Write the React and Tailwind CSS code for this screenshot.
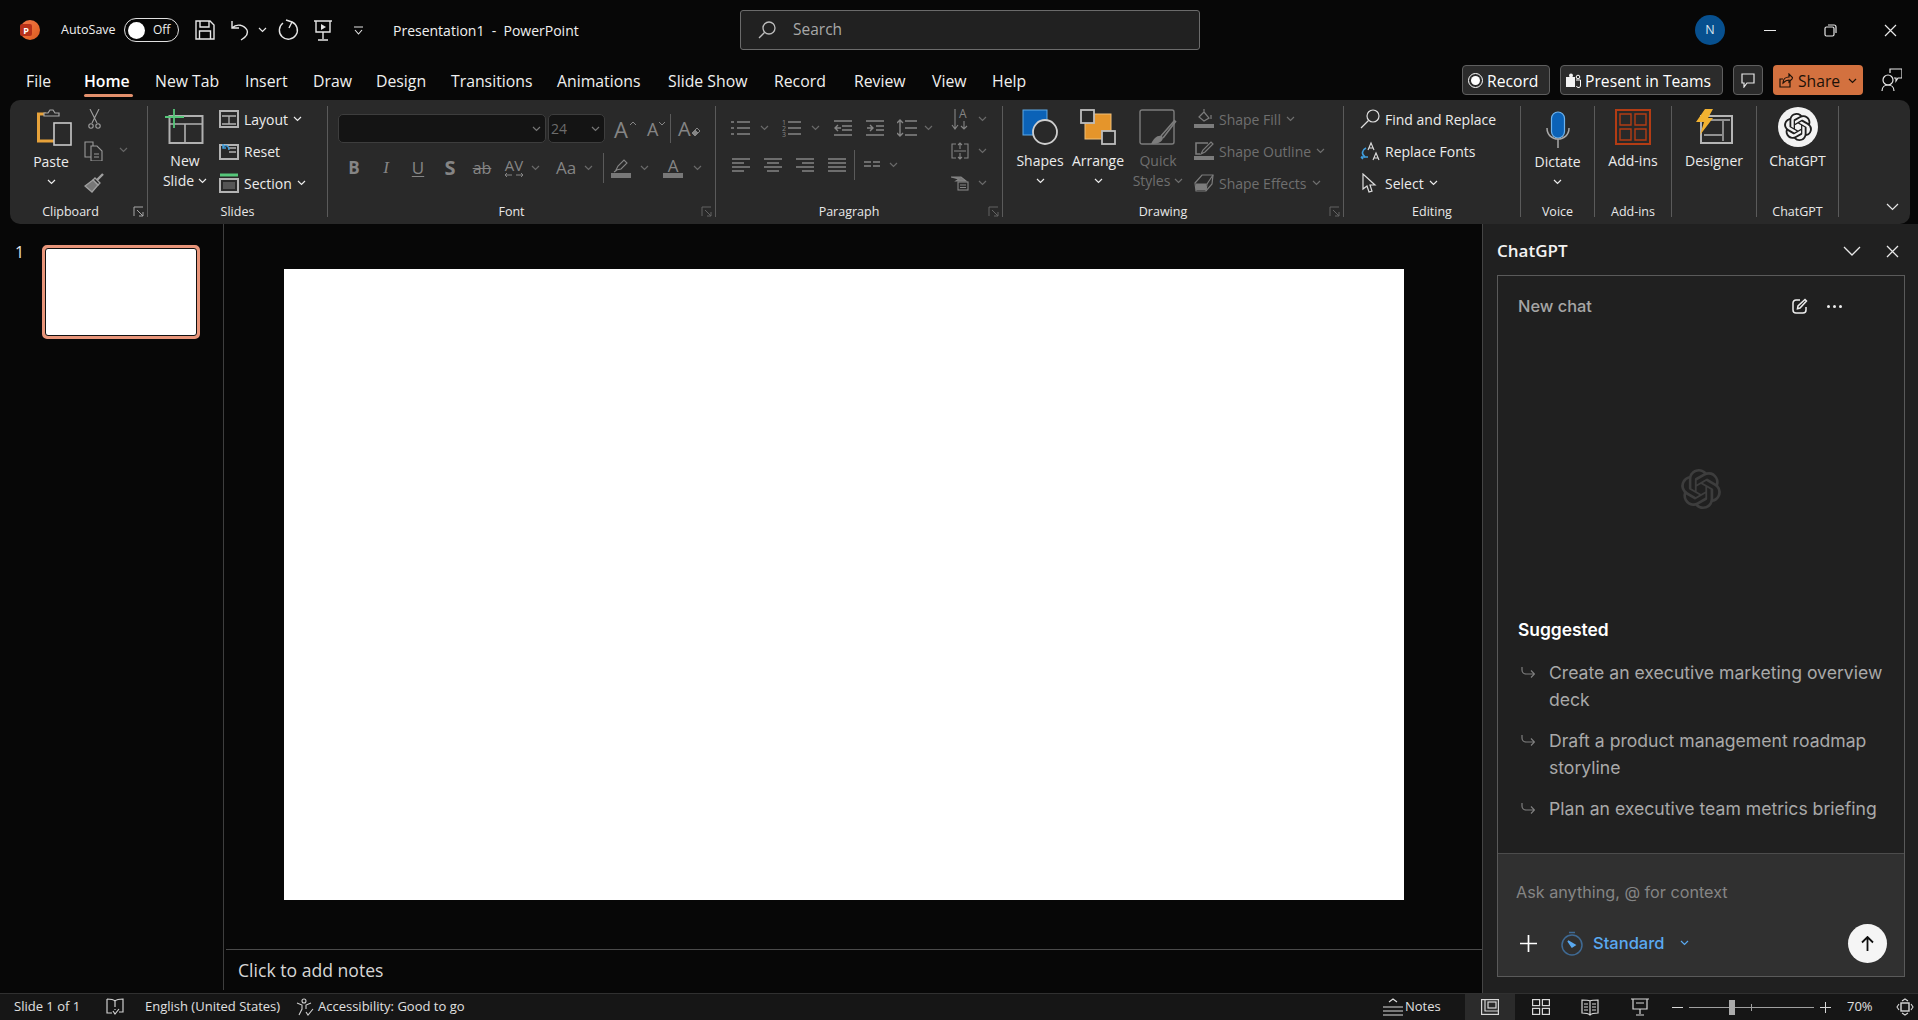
import React from 'react';
import { SiOpenai } from 'react-icons/si';

const Ic = ({ w = 20, h = 20, sw = 1.3, className = '', children }) => (
  <svg width={w} height={h} viewBox={`0 0 ${w} ${h}`} fill="none" stroke="currentColor" strokeWidth={sw} className={`shrink-0 ${className}`}>
    {children}
  </svg>
);

const Chev = ({ className = '' }) => (
  <Ic w={9} h={6} sw={1.2} className={className}><path d="M1 1l3.5 3.5L8 1" /></Ic>
);

const Launcher = () => (
  <Ic w={12} h={12} sw={1} className="text-[#a8a8a8]">
    <path d="M1 10V1h9M4 4l6 6M10 6v4H6" />
  </Ic>
);

const DimLauncher = () => (
  <Ic w={12} h={12} sw={1} className="text-[#636363]">
    <path d="M1 10V1h9M4 4l6 6M10 6v4H6" />
  </Ic>
);

const Sep = () => <div className="w-px h-[111px] mt-[6px] bg-[#5a5a5a] shrink-0" />;

function Group({ w, label, launcher, labelClass = '', children }) {
  return (
    <div className={`${w} shrink-0 flex flex-col`}>
      <div className="h-[100px] flex pt-[3px]">{children}</div>
      <div className="h-[24px] flex items-center">
        <div className={`flex-1 text-center text-[12.5px] text-[#e8e8e8] leading-none ${labelClass}`}>{label}</div>
        {launcher && <div className="w-[16px] flex justify-center">{launcher}</div>}
      </div>
    </div>
  );
}

function BigBtn({ w, ml, icon, line, line2, chev, dim }) {
  return (
    <div className={`${w} ${ml} shrink-0 flex flex-col items-center text-[14px] leading-none ${dim ? 'text-[#6f6f6f]' : 'text-[#ececec]'}`}>
      <div className="h-[48px] flex items-center justify-center">{icon}</div>
      <div className="h-[20px] flex items-center whitespace-nowrap">{line}</div>
      <div className="h-[20px] flex items-center gap-[4px] whitespace-nowrap">
        {line2}
        {chev && <Chev />}
      </div>
    </div>
  );
}

function SmallRow({ icon, text, chev, dim }) {
  return (
    <div className={`h-[32px] flex items-center gap-[5px] text-[14px] whitespace-nowrap ${dim ? 'text-[#6f6f6f]' : 'text-[#ececec]'}`}>
      {icon}
      <span>{text}</span>
      {chev && <Chev />}
    </div>
  );
}

const Dim = ({ className = '', children }) => (
  <div className={`flex items-center justify-center text-[#858585] shrink-0 ${className}`}>{children}</div>
);

const Lines = ({ rows, w = 19, children }) => (
  <Ic w={w} h={20} sw={1.5}>
    {rows.map((r, i) => <path key={i} d={`M${r[0]} ${r[1]}H${r[2]}`} />)}
    {children}
  </Ic>
);

const PasteIcon = () => (
  <Ic w={36} h={40} className="ml-[6px]">
    <path d="M10 6H2.5v27H18" stroke="#e7a23a" strokeWidth="3" />
    <path d="M8 8V5h4l2-3h3l2 3h4v3z" stroke="#a8a8a8" strokeWidth="1.2" fill="#292929" />
    <rect x="18" y="15" width="17" height="22" stroke="#c9c9c9" strokeWidth="1.6" fill="#292929" />
  </Ic>
);

const NewSlideIcon = () => (
  <Ic w={40} h={38}>
    <rect x="4.5" y="8" width="33" height="27" stroke="#b0b0b0" strokeWidth="2" />
    <path d="M5 16h32M20 16v19" stroke="#b0b0b0" strokeWidth="1.6" />
    <path d="M0 9h19M9 1v19" stroke="#56c77a" strokeWidth="1.8" />
  </Ic>
);

const LayoutIcon = () => (
  <Ic className="text-[#b3b3b3]">
    <rect x="1" y="2" width="18" height="16" strokeWidth="2" />
    <path d="M3 7h14M10 7v8M3 15h14" />
  </Ic>
);

const ResetIcon = () => (
  <Ic className="text-[#b3b3b3]">
    <rect x="1" y="4" width="18" height="14" strokeWidth="2" />
    <path d="M9 7h8M10 11h7" />
    <path d="M7 7H4V3M4 6c3-3 6-1 6 3" stroke="#3f9ddc" strokeWidth="1.5" />
  </Ic>
);

const SectionIcon = () => (
  <Ic className="text-[#b3b3b3]">
    <path d="M1 2h18" stroke="#56c77a" strokeWidth="3" />
    <rect x="1" y="6" width="18" height="13" strokeWidth="2" />
    <rect x="4" y="9" width="12" height="7" fill="#555" stroke="none" />
  </Ic>
);

const BrushIcon = () => (
  <Ic className="text-[#a0a0a0]">
    <path d="M19 1l-6 6" strokeWidth="2.4" />
    <path d="M11 5l5 5-2 2-5-5z" />
    <path d="M9 7L1 13l7 6 6-7z" fill="#777" />
  </Ic>
);

const ChatKnot = ({ size, className }) => <SiOpenai size={size} className={className} />;

export default function App() {
  const tabs = [
    ['File', 'w-[58px]'], ['Home', 'w-[71px]'], ['New Tab', 'w-[90px]'], ['Insert', 'w-[68px]'],
    ['Draw', 'w-[63px]'], ['Design', 'w-[75px]'], ['Transitions', 'w-[106px]'], ['Animations', 'w-[111px]'],
    ['Slide Show', 'w-[106px]'], ['Record', 'w-[80px]'], ['Review', 'w-[78px]'], ['View', 'w-[60px]'], ['Help', 'w-[60px]'],
  ];
  const suggestions = [
    ['Create an executive marketing overview', 'deck'],
    ['Draft a product management roadmap', 'storyline'],
    ['Plan an executive team metrics briefing'],
  ];

  return (
    <div className="w-[1918px] h-[1020px] overflow-hidden bg-[#070707] text-white flex flex-col font-['Open_Sans','Liberation_Sans',sans-serif]">
      {/* title bar */}
      <div className="h-[60px] flex items-center shrink-0 text-[#f0f0f0]">
        <div className="ml-[20px] w-[20px] h-[20px] rounded-full bg-[linear-gradient(135deg,#f0764c_0%,#e8692f_60%,#d85a20_100%)] flex items-center">
          <div className="w-[12px] h-[12px] rounded-[2px] bg-[#b7311a] flex items-center justify-center text-[9px] font-bold text-white leading-none">P</div>
        </div>
        <div className="ml-[21px] w-[54px] text-[12.5px] whitespace-nowrap">AutoSave</div>
        <div className="ml-[9px] w-[55px] h-[24px] rounded-full border border-[#e0e0e0] flex items-center pl-[3px] gap-[8px] text-[12px]">
          <div className="w-[17px] h-[17px] rounded-full bg-white" />
          <span>Off</span>
        </div>
        <Ic w={20} h={20} sw={1.4} className="ml-[16px] text-[#e6e6e6]">
          <path d="M1 1h14l4 4v14H1zM5 1v6h9V1M4.5 19v-8h11v8" />
        </Ic>
        <Ic w={20} h={22} sw={1.4} className="ml-[16px] text-[#e6e6e6]">
          <path d="M1 2v7h7M1 9c5-5 12-3 15 2 2 4-1 7-6 10" />
        </Ic>
        <Chev className="ml-[7px] text-[#e6e6e6]" />
        <Ic w={21} h={22} sw={1.4} className="ml-[11px] text-[#e6e6e6]">
          <path d="M5 4A9 9 0 1 0 14 3M8 1l6 2-3 6" />
        </Ic>
        <Ic w={18} h={21} sw={1.4} className="ml-[15px] text-[#e6e6e6]">
          <path d="M0 1h18M2 1v11h14V1M9 12v7M4 20h10" />
          <path d="M7 4l5 3-5 3z" fill="currentColor" stroke="none" />
        </Ic>
        <Ic w={9} h={9} sw={1.1} className="ml-[22px] text-[#e6e6e6]">
          <path d="M0 1h9M1 4l3.5 4L8 4" />
        </Ic>
        <div className="ml-[30px] w-[347px] text-[14px] whitespace-nowrap">Presentation1&nbsp; -&nbsp; PowerPoint</div>
        <div className="w-[460px] h-[40px] rounded-[3px] bg-[#212121] border border-[#6b6b6b] flex items-center pl-[17px] text-[15.5px] text-[#a8a8a8]">
          <Ic w={18} h={18} sw={1.3} className="text-[#bdbdbd]">
            <circle cx="11" cy="7" r="6" /><path d="M6.5 11.5L1 17" />
          </Ic>
          <span className="ml-[17px]">Search</span>
        </div>
        <div className="ml-[495px] w-[30px] h-[30px] rounded-full bg-[#07508f] flex items-center justify-center text-[12.5px] text-[#d8e4f0]">N</div>
        <div className="ml-[39px] w-[12px] h-px bg-[#e8e8e8]" />
        <Ic w={13} h={13} sw={1.2} className="ml-[48px] text-[#e8e8e8]">
          <rect x="1" y="3" width="9" height="9" rx="1.5" /><path d="M4 1h6a2 2 0 0 1 2 2v6" />
        </Ic>
        <Ic w={13} h={13} sw={1.2} className="ml-[47px] text-[#e8e8e8]">
          <path d="M1 1l11 11M12 1L1 12" />
        </Ic>
      </div>

      {/* tabs row */}
      <div className="h-[40px] flex shrink-0 pl-[26px] pr-[16px]">
        {tabs.map(([name, w]) => (
          <div key={name} className={`${w} flex flex-col pt-[9px]`}>
            <div className={`h-[24px] leading-[24px] text-[15.8px] whitespace-nowrap ${name === 'Home' ? 'font-semibold text-white' : 'text-[#f0f0f0]'}`}>{name}</div>
            {name === 'Home' && <div className="mt-[1px] w-[49px] h-[3px] rounded-full bg-[#e2906d]" />}
          </div>
        ))}
        <div className="ml-auto flex h-[30px] mt-[5px] items-center text-[15.7px] leading-[22px]">
          <div className="w-[88px] h-[30px] rounded-[4px] bg-[#2b2b2b] border border-[#5f5f5f] flex items-center pl-[5px] pt-[1px] gap-[4px]">
            <div className="w-[15px] h-[15px] rounded-full border border-white flex items-center justify-center">
              <div className="w-[9px] h-[9px] rounded-full bg-white" />
            </div>
            Record
          </div>
          <div className="ml-[10px] w-[163px] h-[30px] rounded-[4px] bg-[#2b2b2b] border border-[#5f5f5f] flex items-center pl-[5px] pt-[1px] gap-[4px] whitespace-nowrap">
            <Ic w={15} h={16} sw={1}>
              <rect x="0" y="4" width="9" height="10" fill="#f2f2f2" stroke="none" />
              <circle cx="5" cy="2.5" r="2" fill="#f2f2f2" stroke="none" />
              <circle cx="12" cy="4" r="1.8" />
              <path d="M10 7h4.5v5a2 2 0 0 1-4 1" />
            </Ic>
            Present in Teams
          </div>
          <div className="ml-[10px] w-[30px] h-[30px] rounded-[4px] bg-[#2b2b2b] border border-[#5f5f5f] flex items-center justify-center">
            <Ic w={14} h={15} sw={1.2} className="text-[#e8e8e8]"><path d="M1 1h12v9H6l-3 4v-4H1z" /></Ic>
          </div>
          <div className="ml-[10px] w-[90px] h-[30px] rounded-[4px] bg-[#d3713f] flex items-center pl-[6px] pt-[1px] gap-[5px] text-[#1c1108]">
            <Ic w={14} h={15} sw={1.2}><path d="M11 8v6H1V6h3M4 10c0-4 3-6 6-6V1l4 4-4 4V7c-2 0-4 1-6 3z" /></Ic>
            Share
            <Chev className="ml-[3px]" />
          </div>
          <Ic w={21} h={24} sw={1.2} className="ml-[18px] text-[#e8e8e8]">
            <circle cx="7" cy="12" r="5" /><path d="M1 23c0-4 3-6 6-6s6 2 6 6M9 5V1h12v9h-4l-2 3v-3h-2" />
          </Ic>
        </div>
      </div>

      {/* ribbon */}
      <div className="h-[124px] w-[1900px] ml-[10px] rounded-[10px] bg-[#292929] flex shrink-0">
        <Group w="w-[137px]" label="Clipboard" launcher={<Launcher />}>
          <BigBtn w="w-[50px]" ml="ml-[16px] mt-[1px]" icon={<PasteIcon />} line="Paste" line2={<Chev />} />
          <div className="ml-[8px] flex flex-col w-[20px]">
            <div className="h-[32px] flex items-center justify-center text-[#a0a0a0]">
              <Ic w={13} h={20} sw={1.1}><path d="M2 0l7 14M11 0L4 14" /><circle cx="3" cy="17" r="2.2" /><circle cx="10" cy="17" r="2.2" /></Ic>
            </div>
            <div className="h-[32px] flex items-center text-[#9a9a9a]">
              <Ic sw={1.1}>
                <path d="M7 16H1V1h8v4M7 5h6l5 5v10H7zM10 13h5M10 16h5" />
              </Ic>
            </div>
            <div className="h-[32px] flex items-center"><BrushIcon /></div>
          </div>
          <div className="ml-[15px] pt-[44px]"><Chev className="text-[#666]" /></div>
        </Group>
        <Sep />
        <Group w="w-[179px]" label="Slides">
          <BigBtn w="w-[60px]" ml="ml-[7px]" icon={<NewSlideIcon />} line="New" line2="Slide" chev />
          <div className="ml-[4px] flex flex-col">
            <SmallRow icon={<LayoutIcon />} text="Layout" chev />
            <SmallRow icon={<ResetIcon />} text="Reset" />
            <SmallRow icon={<SectionIcon />} text="Section" chev />
          </div>
        </Group>
        <Sep />
        <Group w="w-[387px]" label="Font" labelClass="pr-[4px]" launcher={<DimLauncher />}>
          <div className="flex flex-col pl-[10px] text-[#858585]">
            <div className="mt-[11px] h-[29px] flex items-center">
              <div className="w-[208px] h-[29px] rounded-[5px] bg-[#141414] border border-[#3d3d3d] flex items-center justify-end pr-[4px]"><Chev className="text-[#777]" /></div>
              <div className="ml-[2px] w-[57px] h-[29px] rounded-[5px] bg-[#141414] border border-[#3d3d3d] flex items-center justify-between pl-[2px] pr-[4px] text-[14px] text-[#6c6c6c]">24<Chev className="text-[#777]" /></div>
              <span className="ml-[9px] text-[22px] w-[15px] leading-none">A</span>
              <Ic w={7} h={5} sw={1} className="mb-[10px] ml-[1px]"><path d="M0 4l3-3 3 3" /></Ic>
              <span className="ml-[10px] text-[18px] w-[12px] leading-none">A</span>
              <Ic w={7} h={5} sw={1} className="mb-[10px]"><path d="M0 1l3 3 3-3" /></Ic>
              <div className="ml-[4px] w-px h-[29px] bg-[#5a5a5a]" />
              <span className="ml-[7px] text-[20px] w-[13px] leading-none">A</span>
              <Ic w={10} h={12} sw={1} className="mt-[6px]"><path d="M1 7l5-5 3 3-5 5z" /><path d="M1 7l3-3 3 3-3 3z" fill="currentColor" /></Ic>
            </div>
            <div className="mt-[10px] h-[30px] flex items-center text-[17px]">
              <Dim className="w-[32px] font-bold">B</Dim>
              <Dim className="w-[32px] italic font-['Liberation_Serif',serif]">I</Dim>
              <Dim className="w-[32px] underline underline-offset-2">U</Dim>
              <Dim className="w-[32px] font-bold text-[20px]">S</Dim>
              <Dim className="w-[32px] line-through text-[16px]">ab</Dim>
              <div className="w-[48px] flex items-center">
                <div className="ml-[6px] w-[20px] flex flex-col items-center text-[15px] leading-[13px]">
                  AV
                  <Ic w={20} h={6} sw={1}><path d="M1 3h7M1 3l2-2M1 3l2 2M19 3h-7M19 3l-2-2M19 3l-2 2" /></Ic>
                </div>
                <Chev className="ml-[7px] text-[#6a6a6a]" />
              </div>
              <div className="w-[50px] flex items-center">
                <span className="ml-[10px] text-[17px] w-[24px] whitespace-nowrap">Aa</span>
                <Chev className="ml-[4px] text-[#6a6a6a]" />
              </div>
              <div className="ml-[7px] w-px h-[30px] bg-[#5a5a5a]" />
              <div className="ml-[7px] w-[20px] flex flex-col items-center">
                <Ic w={20} h={14} sw={1.1}><path d="M5 11l2-4 6-6 3 3-6 6zM3 13l3-2" /></Ic>
                <div className="w-[20px] h-[5px] bg-[#787878]" />
              </div>
              <Chev className="ml-[9px] text-[#6a6a6a]" />
              <div className="ml-[14px] w-[20px] flex flex-col items-center">
                <span className="text-[17px] leading-[14px]">A</span>
                <div className="w-[20px] h-[5px] bg-[#787878]" />
              </div>
              <Chev className="ml-[10px] text-[#6a6a6a]" />
            </div>
          </div>
        </Group>
        <Sep />
        <Group w="w-[286px]" label="Paragraph" labelClass="pr-[4px]" launcher={<DimLauncher />}>
          <div className="ml-[15px] w-[220px] flex flex-col text-[#858585]">
            <div className="h-[24px] mt-[13px] flex items-center">
              <Lines w={19} rows={[[6, 4, 19], [6, 10, 19], [6, 16, 19], [0, 4, 3], [0, 10, 3], [0, 16, 3]]} />
              <Chev className="ml-[10px] text-[#6a6a6a]" />
              <div className="ml-[13px]">
                <Lines w={19} rows={[[6, 4, 19], [6, 10, 19], [6, 16, 19]]}>
                  <text x="0" y="7" fontSize="7" fill="currentColor" stroke="none">1</text>
                  <text x="0" y="13" fontSize="7" fill="currentColor" stroke="none">2</text>
                  <text x="0" y="19" fontSize="7" fill="currentColor" stroke="none">3</text>
                </Lines>
              </div>
              <Chev className="ml-[10px] text-[#6a6a6a]" />
              <div className="ml-[14px]"><Ic w={18} sw={1.4}><path d="M0 3h18M8 8h10M8 12h10M0 17h18M7 10H1M4 7l-3 3 3 3" /></Ic></div>
              <div className="ml-[14px]"><Ic w={18} sw={1.4}><path d="M0 3h18M10 8h8M10 12h8M0 17h18M1 10h6M4 7l3 3-3 3" /></Ic></div>
              <div className="ml-[13px]"><Ic w={20} sw={1.4}><path d="M8 3h12M8 10h12M8 17h12M3 2v16M0 5l3-3 3 3M0 15l3 3 3-3" /></Ic></div>
              <Chev className="ml-[7px] text-[#6a6a6a]" />
            </div>
            <div className="h-[30px] mt-[10px] flex items-center pl-[1px]">
              <Lines w={18} rows={[[0, 4, 18], [0, 8, 12], [0, 12, 18], [0, 16, 12]]} />
              <div className="ml-[14px]"><Lines w={18} rows={[[0, 4, 18], [3, 8, 15], [0, 12, 18], [3, 16, 15]]} /></div>
              <div className="ml-[14px]"><Lines w={18} rows={[[0, 4, 18], [6, 8, 18], [0, 12, 18], [6, 16, 18]]} /></div>
              <div className="ml-[14px]"><Lines w={18} rows={[[0, 4, 18], [0, 8, 18], [0, 12, 18], [0, 16, 18]]} /></div>
              <div className="ml-[8px] w-px h-[30px] bg-[#5a5a5a]" />
              <div className="ml-[9px]"><Lines w={16} rows={[[0, 7, 7], [9, 7, 16], [0, 11, 7], [9, 11, 16]]} /></div>
              <Chev className="ml-[9px] text-[#6a6a6a]" />
            </div>
          </div>
          <div className="flex flex-col text-[#858585]">
            <div className="h-[32px] flex items-center">
              <Ic w={18} h={22} sw={1.1}>
                <path d="M4 1v20M1 17l3 4 3-4M13 13v8M10 18l3 3 3-3" />
                <text x="8" y="10" fontSize="12" fill="currentColor" stroke="none">A</text>
              </Ic>
              <Chev className="ml-[9px] text-[#6a6a6a]" />
            </div>
            <div className="h-[32px] flex items-center">
              <Ic w={18} sw={1.1}><path d="M5 3H1v14h4M13 3h4v14h-4M3 10h12M9 2v6M7 4l2-2 2 2M9 12v6M7 16l2 2 2-2" /></Ic>
              <Chev className="ml-[9px] text-[#6a6a6a]" />
            </div>
            <div className="h-[32px] flex items-center">
              <Ic w={18} sw={1.1}><path d="M0 4h10l5 4H5l3-2z" fill="#777" /><rect x="7" y="9" width="10" height="8" /><path d="M9 12h6M9 14.5h6" /></Ic>
              <Chev className="ml-[9px] text-[#6a6a6a]" />
            </div>
          </div>
        </Group>
        <Sep />
        <Group w="w-[340px]" label="Drawing" labelClass="pr-[4px]" launcher={<DimLauncher />}>
          <BigBtn w="w-[56px]" ml="ml-[9px]" line="Shapes" line2={<Chev />} icon={
            <Ic w={36} h={36} sw={1}>
              <rect x="1" y="1" width="24" height="25" fill="#0b62b7" stroke="#5fa8e4" />
              <circle cx="23" cy="23" r="12" fill="#292929" stroke="#cfcfcf" strokeWidth="1.8" />
            </Ic>
          } />
          <BigBtn w="w-[60px]" ml="ml-[0px]" line="Arrange" line2={<Chev />} icon={
            <Ic w={36} h={36} sw={1}>
              <rect x="5" y="5" width="26" height="25" fill="#e5952b" stroke="#f0c07a" />
              <rect x="1" y="1" width="13" height="13" fill="#292929" stroke="#bdbdbd" strokeWidth="1.8" />
              <rect x="22" y="22" width="13" height="13" fill="#292929" stroke="#bdbdbd" strokeWidth="1.8" />
            </Ic>
          } />
          <BigBtn w="w-[60px]" ml="ml-[0px]" dim line="Quick" line2="Styles" chev icon={
            <Ic w={38} h={36} sw={1.4} className="text-[#7c7c7c]">
              <rect x="1" y="1" width="34" height="34" rx="2" />
              <path d="M36 11L22 27M37 12L24 29" strokeWidth="1.6" />
              <path d="M12 35c3-6 6-9 11-8l1 2c-1 4-5 6-12 6z" fill="#7c7c7c" stroke="none" />
            </Ic>
          } />
          <div className="ml-[6px] flex flex-col">
            <SmallRow dim chev text="Shape Fill" icon={
              <Ic className="text-[#7c7c7c]" sw={1.2}><path d="M5 8l5-5 5 6-5 3zM10 3V0M17 6v4" /><path d="M0 17h20" strokeWidth="4" /></Ic>
            } />
            <SmallRow dim chev text="Shape Outline" icon={
              <Ic className="text-[#7c7c7c]" sw={1.2}><path d="M14 2H2v11h4" strokeWidth="1.6" /><path d="M7 13l2-4 8-8 2 2-8 8z" /><path d="M0 17h20" strokeWidth="4" /></Ic>
            } />
            <SmallRow dim chev text="Shape Effects" icon={
              <Ic className="text-[#7c7c7c]" sw={1.2}><path d="M1 10l7-8h11l-1 9-6 7H2z" /><path d="M2 11h11l6-9M13 11l-1 7" /><path d="M2 11h10v6H2z" fill="#7c7c7c" stroke="none" /></Ic>
            } />
          </div>
        </Group>
        <Sep />
        <Group w="w-[176px]" label="Editing">
          <div className="ml-[16px] flex flex-col">
            <SmallRow text="Find and Replace" icon={
              <Ic className="text-[#dedede]" sw={1.2}><circle cx="13" cy="7" r="6" /><path d="M8.5 11.5L1 19" /></Ic>
            } />
            <SmallRow text="Replace Fonts" icon={
              <Ic className="text-[#dedede]" sw={1.1}>
                <path d="M8 9l3-7 3 7M9 7h4M13 19l3-7 3 7M14 17h4" />
                <path d="M6 7C2 9 1 13 5 16" stroke="#3f9ddc" strokeWidth="1.6" />
                <path d="M1 16h7M3 18l-2-2" stroke="#3f9ddc" strokeWidth="1.6" />
              </Ic>
            } />
            <SmallRow text="Select" chev icon={
              <Ic className="text-[#dedede]" sw={1.2}><path d="M3 1v15l4-3 2 6 3-1-2-6h5z" /></Ic>
            } />
          </div>
        </Group>
        <Sep />
        <Group w="w-[73px]" label="Voice">
          <BigBtn w="w-[73px]" ml="ml-[0px] mt-[1px]" line="Dictate" line2={<Chev />} icon={
            <Ic w={24} h={38} sw={1.5} className="text-[#a8a8a8] mt-[4px]">
              <rect x="5.5" y="1" width="13" height="26" rx="6.5" fill="#0b62b7" stroke="#6db3ee" strokeWidth="1.2" />
              <path d="M1 17c0 7 5 11 11 11s11-4 11-11M12 28v9" />
            </Ic>
          } />
        </Group>
        <Sep />
        <Group w="w-[76px]" label="Add-ins">
          <BigBtn w="w-[76px]" ml="ml-[0px]" line="Add-ins" line2="" icon={
            <Ic w={36} h={36} sw={2} className="text-[#b33c14]">
              <rect x="1" y="1" width="34" height="34" />
              <path d="M5 5h11v11H5zM20 5h11v11H20zM5 20h11v11H5zM20 20h11v11H20z" strokeWidth="1.4" />
            </Ic>
          } />
        </Group>
        <Sep />
        <Group w="w-[84px]" label="">
          <BigBtn w="w-[84px]" ml="ml-[0px]" line="Designer" line2="" icon={
            <Ic w={38} h={36} sw={2} className="text-[#b5b5b5]">
              <rect x="6" y="7" width="31" height="27" />
              <path d="M8 11h27M28 12v20M9 26h18" strokeWidth="1.4" />
              <path d="M10 0h8l-5 9h5L5 26l4-13H1z" fill="#f2b231" stroke="none" />
            </Ic>
          } />
        </Group>
        <Sep />
        <Group w="w-[81px]" label="ChatGPT">
          <BigBtn w="w-[81px]" ml="ml-[0px]" line="ChatGPT" line2="" icon={
            <div className="w-[40px] h-[40px] rounded-full bg-[#f2f2f2] flex items-center justify-center">
              <ChatKnot size={28} className="text-[#1f1f1f]" />
            </div>
          } />
        </Group>
        <Sep />
        <div className="flex-1 flex justify-end items-end pr-[11px] pb-[13px]">
          <Ic w={13} h={8} sw={1.2} className="text-[#e8e8e8]"><path d="M1 1l5.5 5.5L12 1" /></Ic>
        </div>
      </div>

      {/* main area */}
      <div className="h-[769px] flex shrink-0">
        <div className="w-[224px] flex border-r border-[#3e3e3e] mb-[3px] shrink-0">
          <div className="w-[42px] pl-[15px] pt-[20px] text-[16px] text-[#e8e8e8] leading-none">1</div>
          <div className="mt-[21px] w-[158px] h-[94px] rounded-[5px] border-[2px] border-[#e8957a] bg-[#e8957a] p-px">
            <div className="w-full h-full rounded-[3px] bg-white border border-[#111]" />
          </div>
        </div>
        <div className="w-[1258px] flex flex-col shrink-0">
          <div className="h-[725px] pl-[60px] pt-[45px]">
            <div className="w-[1120px] h-[631px] bg-white" />
          </div>
          <div className="h-[41px] ml-[2px] border-t border-[#4a4a4a] flex items-center pl-[12px] text-[17.6px] text-[#d6d6d6]">Click to add notes</div>
        </div>

        {/* ChatGPT pane */}
        <div className="w-[436px] bg-[#202020] border-l border-[#444] flex flex-col shrink-0">
          <div className="h-[51px] flex items-center pl-[14px] pt-[3px] shrink-0">
            <span className="text-[17px] font-semibold text-[#f2f2f2]">ChatGPT</span>
            <Ic w={18} h={10} sw={1.3} className="ml-auto text-[#e8e8e8]"><path d="M1 1l8 8 8-8" /></Ic>
            <Ic w={13} h={13} sw={1.3} className="ml-[25px] mr-[19px] text-[#e8e8e8]"><path d="M1 1l11 11M12 1L1 12" /></Ic>
          </div>
          <div className="ml-[14px] w-[408px] h-[702px] border border-[#5a5a5a] flex flex-col font-['Inter',sans-serif] shrink-0">
            <div className="h-[60px] flex items-center pl-[20px] shrink-0">
              <span className="text-[16.4px] font-medium text-[#a6a6a6]">New chat</span>
              <Ic w={16} h={16} sw={1.5} className="ml-[200px] text-[#ededed]">
                <path d="M8 2H4a3 3 0 0 0-3 3v7a3 3 0 0 0 3 3h7a3 3 0 0 0 3-3V9" />
                <path d="M13 1.5l1.5 1.5L8 10l-2.5.7L6 8z" />
              </Ic>
              <div className="ml-[19px] flex gap-[3px]">
                <div className="w-[3px] h-[3px] rounded-full bg-[#ededed]" />
                <div className="w-[3px] h-[3px] rounded-full bg-[#ededed]" />
                <div className="w-[3px] h-[3px] rounded-full bg-[#ededed]" />
              </div>
            </div>
            <div className="h-[280px] pt-[26px] flex items-center justify-center shrink-0">
              <ChatKnot size={40} className="text-[#3d3d3d]" />
            </div>
            <div className="pl-[20px] flex flex-col h-[237px] shrink-0">
              <div className="h-[28px] flex items-center text-[17.4px] font-semibold text-white">Suggested</div>
              <div className="mt-[15px] flex flex-col gap-[14px]">
                {suggestions.map(lines => (
                  <div key={lines[0]} className="flex">
                    <Ic w={14} h={27} sw={1.2} className="ml-[3px] text-[#7e7e7e]"><path d="M1 8v3a4 4 0 0 0 4 4h8M10 11.5l3.5 3.5L10 18.5" /></Ic>
                    <div className="ml-[14px] text-[17.6px] leading-[27px] text-[#a9a9a9] whitespace-nowrap">
                      {lines.map(l => <div key={l}>{l}</div>)}
                    </div>
                  </div>
                ))}
              </div>
            </div>
            <div className="flex-1 bg-[#303030] border-t border-[#4c4c4c] flex flex-col">
              <div className="h-[61px] pt-[16px] flex items-center pl-[18px] text-[16.2px] text-[#858585] shrink-0">Ask anything, @ for context</div>
              <div className="h-[56px] flex items-center shrink-0">
                <Ic w={17} h={17} sw={1.7} className="ml-[22px] text-white"><path d="M8.5 0v17M0 8.5h17" /></Ic>
                <Ic w={22} h={25} sw={1.5} className="ml-[24px] text-[#3f6a94]">
                  <circle cx="11" cy="14" r="10" />
                  <path d="M8 1.5h6" />
                  <path d="M7 10l7 4-3 2z" fill="#5aa9f0" stroke="#5aa9f0" />
                </Ic>
                <span className="ml-[10px] text-[16.5px] font-medium text-[#5aa9f0]">Standard</span>
                <Chev className="ml-[15px] text-[#5aa9f0]" />
                <div className="ml-auto mr-[17px] w-[39px] h-[39px] rounded-full bg-[#f5f5f5] flex items-center justify-center">
                  <Ic w={13} h={15} sw={1.8} className="text-[#111]"><path d="M6.5 15V1M1 6.5L6.5 1 12 6.5" /></Ic>
                </div>
              </div>
            </div>
          </div>
        </div>
      </div>

      {/* status bar */}
      <div className="h-[27px] bg-[#161616] border-t border-[#303030] flex items-center text-[13px] text-[#e0e0e0] shrink-0">
        <div className="ml-[14px] w-[92px]">Slide 1 of 1</div>
        <Ic w={18} h={18} sw={1.2} className="text-[#d0d0d0]"><path d="M1 1c3 0 6 0 8 2 2-2 5-2 8-2v13h-4M1 1v14h5M9 3v6M9 11v1M7 13l2 3 4-5" /></Ic>
        <div className="ml-[21px] w-[151px] whitespace-nowrap">English (United States)</div>
        <Ic w={19} h={19} sw={1.1} className="text-[#d0d0d0]"><circle cx="8" cy="3" r="2" /><path d="M1 5l5 2v4l-3 6M15 5l-5 2v4M10 14l2 3 5-6" /></Ic>
        <div className="ml-[3px] whitespace-nowrap">Accessibility: Good to go</div>
        <div className="ml-auto flex items-center h-full">
          <Ic w={20} h={20} sw={1.2} className="text-[#dcdcdc]"><path d="M0 10h20M0 14h20M0 18h20M6 5l4-3 4 3" /></Ic>
          <span className="ml-[2px] w-[60px]">Notes</span>
          <div className="w-[50px] h-full bg-[#2b2b2b] flex items-center justify-center">
            <Ic w={18} h={16} sw={1.2} className="text-[#d8d8d8]"><rect x="0.6" y="0.6" width="16.8" height="14.8" /><path d="M4 1v11h13" /><rect x="7" y="3" width="8" height="6" /></Ic>
          </div>
          <Ic w={18} h={16} sw={1.2} className="ml-[17px] text-[#d8d8d8]"><rect x="0.6" y="0.6" width="7" height="6" /><rect x="10.4" y="0.6" width="7" height="6" /><rect x="0.6" y="9.4" width="7" height="6" /><rect x="10.4" y="9.4" width="7" height="6" /></Ic>
          <Ic w={18} h={18} sw={1.2} className="ml-[31px] text-[#d8d8d8]"><path d="M1 2c3 0 6 0 8 1 2-1 5-1 8-1v13c-3 0-6 0-8 2-2-2-5-2-8-2zM9 3v14M3 6h4M3 9h4M3 12h4M11 6h4M11 9h4M11 12h4" /></Ic>
          <Ic w={18} h={18} sw={1.2} className="ml-[32px] text-[#d8d8d8]"><path d="M0 1h18M2 1v10h14V1M9 11v5M5 17h8M5 5h8" /></Ic>
          <div className="ml-[23px] w-[11px] h-px bg-[#d8d8d8]" />
          <div className="ml-[6px] w-[125px] h-px bg-[#a0a0a0] flex items-center">
            <div className="ml-[40px] w-[6px] h-[15px] bg-[#ababab]" />
            <div className="ml-[16px] w-px h-[7px] bg-[#a0a0a0]" />
          </div>
          <Ic w={11} h={11} sw={1} className="ml-[6px] text-[#d8d8d8]"><path d="M5.5 0v11M0 5.5h11" /></Ic>
          <span className="ml-[16px] w-[49px]">70%</span>
          <Ic w={18} h={18} sw={1.1} className="mr-[4px] text-[#d8d8d8]"><rect x="5" y="5" width="8" height="8" strokeWidth="1.4" /><path d="M6 3l3-2 3 2M6 15l3 2 3-2M3 6l-2 3 2 3M15 6l2 3-2 3" /></Ic>
        </div>
      </div>
    </div>
  );
}
